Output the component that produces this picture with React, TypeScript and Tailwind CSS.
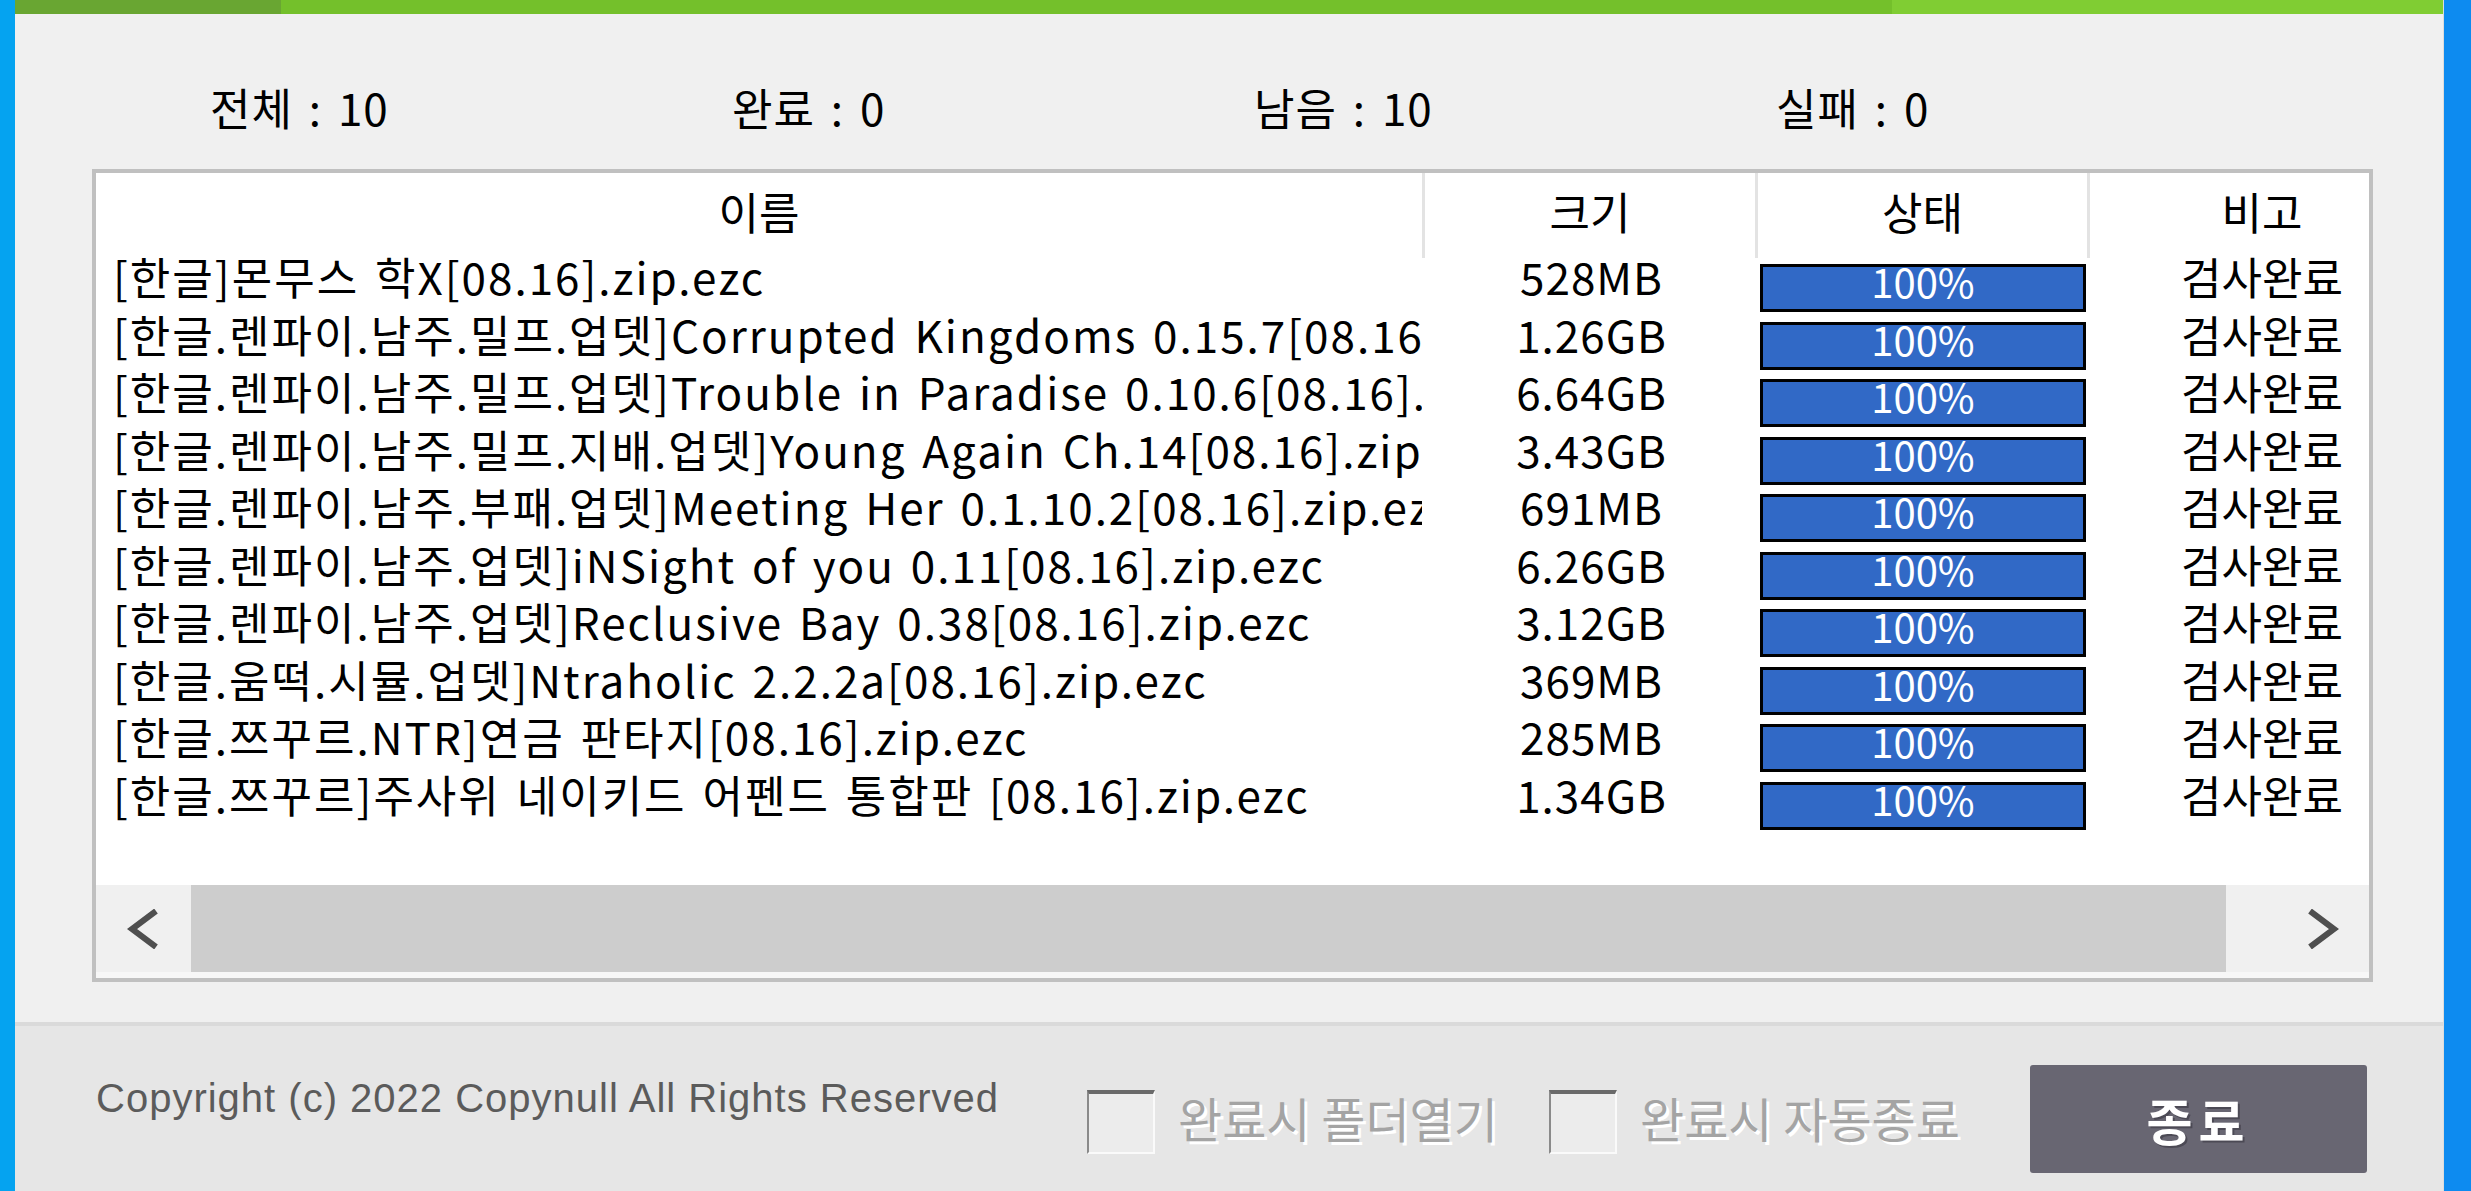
import React from 'react';

const rows = [
  { name: '[한글]몬무스 학X[08.16].zip.ezc', size: '528MB' },
  { name: '[한글.렌파이.남주.밀프.업뎃]Corrupted Kingdoms 0.15.7[08.16].zip.ezc', size: '1.26GB' },
  { name: '[한글.렌파이.남주.밀프.업뎃]Trouble in Paradise 0.10.6[08.16].zip.ezc', size: '6.64GB' },
  { name: '[한글.렌파이.남주.밀프.지배.업뎃]Young Again Ch.14[08.16].zip.ezc', size: '3.43GB' },
  { name: '[한글.렌파이.남주.부패.업뎃]Meeting Her 0.1.10.2[08.16].zip.ezc', size: '691MB' },
  { name: '[한글.렌파이.남주.업뎃]iNSight of you 0.11[08.16].zip.ezc', size: '6.26GB' },
  { name: '[한글.렌파이.남주.업뎃]Reclusive Bay 0.38[08.16].zip.ezc', size: '3.12GB' },
  { name: '[한글.움떡.시뮬.업뎃]Ntraholic 2.2.2a[08.16].zip.ezc', size: '369MB' },
  { name: '[한글.쯔꾸르.NTR]연금 판타지[08.16].zip.ezc', size: '285MB' },
  { name: '[한글.쯔꾸르]주사위 네이키드 어펜드 통합판 [08.16].zip.ezc', size: '1.34GB' },
];

const stats = [
  ['전체', '10'],
  ['완료', '0'],
  ['남음', '10'],
  ['실패', '0'],
];

function Chevron({ dir }: { dir: 'left' | 'right' }) {
  return (
    <svg width="36" height="40" viewBox="0 0 36 40">
      <polyline
        points={dir === 'left' ? '30,2 6,20 30,38' : '6,2 30,20 6,38'}
        fill="none"
        stroke="#4f4f4f"
        strokeWidth="6"
      />
    </svg>
  );
}

function Checkbox({ label, width }: { label: string; width: string }) {
  return (
    <>
      <div className="mt-[64px] w-[68px] h-[64px] shrink-0 bg-[#ececec] border-t-4 border-t-[#6a6a6a] border-l-2 border-l-[#8a8a8a] border-r-2 border-r-[#fafafa] border-b-2 border-b-[#fafafa]" />
      <div className={`${width} shrink-0 mt-[67px] pl-[23px] text-[48px] leading-none text-[#a4a4a4] whitespace-nowrap [text-shadow:3px_3px_0_#ffffff]`}>
        {label}
      </div>
    </>
  );
}

export default function App() {
  return (
    <div className="w-[2471px] h-[1191px] flex overflow-hidden bg-[#f0f0f0] font-['Noto_Sans_CJK_KR',sans-serif] text-black">
      <div className="w-[15px] shrink-0 bg-[#05a3f0]" />

      <div className="flex-1 flex flex-col min-w-0 border-r border-[#dcdcdc]">
        {/* top progress strip */}
        <div className="h-[14px] flex shrink-0">
          <div className="w-[266px] bg-[#69a632]" />
          <div className="w-[1611px] bg-[#74c02b]" />
          <div className="flex-1 bg-[#80cd33]" />
        </div>

        {/* counters */}
        <div className="h-[155px] shrink-0 flex pl-[195px] pt-[71px]">
          {stats.map(([k, v]) => (
            <div key={k} className="w-[522px] text-[44px] leading-none tracking-[1px] [word-spacing:5px] whitespace-nowrap">
              {k} : {v}
            </div>
          ))}
        </div>

        {/* list */}
        <div className="ml-[77px] mr-[70px] h-[813px] shrink-0 border-4 border-[#c0c0c0] bg-white flex flex-col overflow-hidden">
          <div className="h-[85px] flex shrink-0 text-[44px] leading-none">
            <div className="w-[1329px] shrink-0 border-r-[3px] border-[#e3e3e3] flex items-center justify-center pb-[10px]">이름</div>
            <div className="w-[333px] shrink-0 border-r-[3px] border-[#e3e3e3] flex items-center justify-center pb-[10px]">크기</div>
            <div className="w-[332px] shrink-0 border-r-[3px] border-[#e3e3e3] flex items-center justify-center pb-[10px]">상태</div>
            <div className="w-[344px] shrink-0 flex items-center justify-center pb-[10px]">비고</div>
          </div>

          <div className="flex flex-col shrink-0">
            {rows.map((r) => (
              <div key={r.name} className="h-[57.5px] flex items-start text-[44px] leading-[36px]">
                <div className="w-[1329px] shrink-0 pl-[17px] pr-[3px]">
                  <div className="overflow-x-clip whitespace-nowrap tracking-[2px] [word-spacing:4px]">{r.name}</div>
                </div>
                <div className="w-[333px] shrink-0 text-center tracking-[1px]">{r.size}</div>
                <div className="w-[332px] shrink-0 pl-[2px] pt-[6px]">
                  <div className="w-[326px] h-[48px] pb-[14px] border-[3px] border-black bg-[#3169c6] text-white text-[40px] leading-none flex items-center justify-center">
                    100%
                  </div>
                </div>
                <div className="w-[344px] shrink-0 text-center">검사완료</div>
              </div>
            ))}
          </div>

          <div className="flex-1" />

          {/* horizontal scrollbar */}
          <div className="h-[87px] shrink-0 flex bg-[#f0f0f0]">
            <div className="w-[95px] shrink-0 flex items-center justify-center">
              <Chevron dir="left" />
            </div>
            <div className="flex-1 flex">
              <div className="w-[2035px] bg-[#cdcdcd]" />
            </div>
            <div className="w-[95px] shrink-0 flex items-center justify-center">
              <Chevron dir="right" />
            </div>
          </div>
          <div className="h-[6px] shrink-0 bg-[#f7f7f7]" />
        </div>

        <div className="h-[40px] shrink-0" />
        <div className="h-[4px] shrink-0 bg-[#dadada]" />

        {/* footer */}
        <div className="flex-1 bg-[#e6e6e6] flex items-start pl-[81px]">
          <div className="w-[991px] shrink-0 mt-[52px] text-[40px] leading-none tracking-[1px] text-[#5b5b5b] whitespace-nowrap font-['Liberation_Sans',sans-serif]">
            Copyright (c) 2022 Copynull All Rights Reserved
          </div>
          <Checkbox label="완료시 폴더열기" width="w-[394px]" />
          <Checkbox label="완료시 자동종료" width="w-[413px]" />
          <button className="mt-[39px] w-[337px] h-[108px] shrink-0 rounded-[3px] bg-[#686672] text-white text-[50px] leading-none font-semibold tracking-[6px] [text-shadow:2px_2px_0_#4c4a55]">
            종료
          </button>
        </div>
      </div>

      <div className="w-[27px] shrink-0 bg-[#0d8bf0]" />
    </div>
  );
}
